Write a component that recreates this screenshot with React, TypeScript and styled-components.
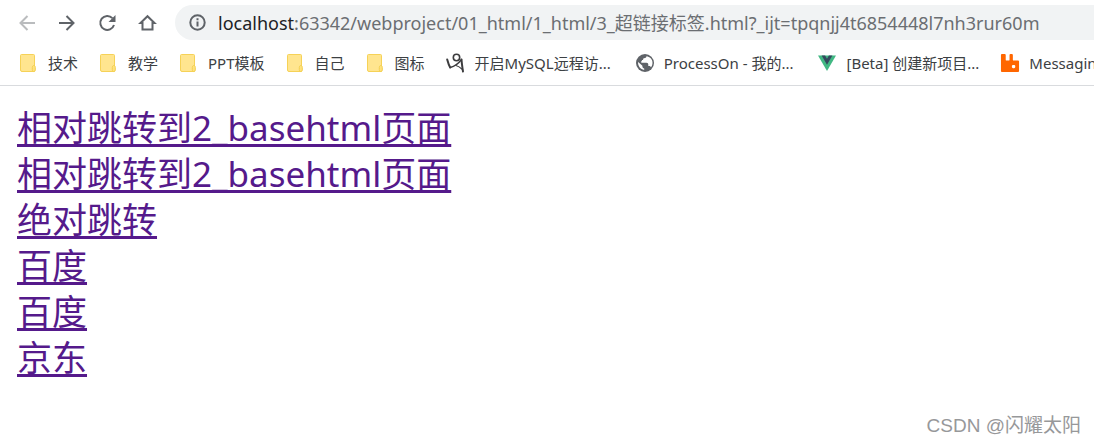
import React from 'react';
import styled, { createGlobalStyle } from 'styled-components';

const GlobalStyle = createGlobalStyle`
  * { box-sizing: border-box; }
  body {
    margin: 0;
    background: #fff;
    font-family: "Noto Sans", "Noto Sans CJK SC", sans-serif;
  }
`;

const Page = styled.div`
  position: relative;
  min-height: 100vh;
  overflow: hidden;
`;

const Toolbar = styled.header`
  display: flex;
  align-items: center;
  gap: 20px;
  padding: 5px 0 0 17px;
`;

const NavButton = styled.button<{ $muted?: boolean }>`
  flex: none;
  width: 20px;
  height: 20px;
  padding: 0;
  border: 0;
  background: none;
  color: ${(p) => (p.$muted ? '#babcbe' : '#5f6368')};

  svg { display: block; }
`;

const AddressBar = styled.label`
  flex: 1;
  display: flex;
  align-items: center;
  min-width: 0;
  height: 35px;
  margin-left: -2px;
  padding-left: 13px;
  border-radius: 18px 0 0 18px;
  background: #f1f3f4;
  color: #202124;
  font-size: 18px;
  line-height: 28px;
`;

const InfoMark = styled.span`
  display: flex;
  width: 30px;
  color: #5f6368;
`;

const AddressInput = styled.input`
  flex: 1;
  min-width: 0;
  height: 28px;
  padding: 0;
  border: 0;
  outline: 0;
  background: none;
  color: #6b6e72;
  font: inherit;
`;

const Bookmarks = styled.nav`
  display: flex;
  gap: 21px;
  height: 46px;
  padding: 0 0 0 19px;
  border-bottom: 1px solid #d9dbde;
  overflow: hidden;
`;

const Bookmark = styled.a<{ $long?: boolean }>`
  flex: none;
  display: flex;
  align-items: center;
  gap: 9px;
  padding-right: ${(p) => (p.$long ? 3 : 0)}px;
  color: #3c4043;
  font-size: 15px;
  line-height: 20px;
  text-decoration: none;
  white-space: nowrap;

  svg { display: block; flex: none; }
`;

const Links = styled.main`
  display: flex;
  flex-direction: column;
  align-items: flex-start;
  padding: 19px 17px;
`;

const PageLink = styled.a`
  color: #551a8b;
  font-size: 35px;
  line-height: 46px;
  text-decoration: underline;
  text-decoration-thickness: 3px;
  text-underline-offset: 3px;
  text-decoration-skip-ink: none;
`;

const Watermark = styled.div`
  position: absolute;
  right: 13px;
  bottom: 4px;
  color: #97989a;
  font-family: "Liberation Sans", "Noto Sans CJK SC", sans-serif;
  font-size: 19px;
  line-height: 28px;
`;

const Back = () => (
  <svg width="20" height="20" viewBox="0 0 20 20" fill="none" stroke="currentColor" strokeWidth="2">
    <path d="M18 10H4M10.5 3 3.5 10l7 7" />
  </svg>
);

const Forward = () => (
  <svg width="20" height="20" viewBox="0 0 20 20" fill="none" stroke="currentColor" strokeWidth="2">
    <path d="M2 10h14M9.5 3l7 7-7 7" />
  </svg>
);

const Reload = () => (
  <svg width="20" height="20" viewBox="0 0 20 20">
    <path d="M15.4 5.1A7 7 0 1 0 17 12" fill="none" stroke="currentColor" strokeWidth="2" />
    <path d="M18.5 2v7h-7z" fill="currentColor" />
  </svg>
);

const Home = () => (
  <svg width="20" height="20" viewBox="0 0 20 20" fill="none" stroke="currentColor" strokeWidth="2">
    <path d="M3.500 10H5.500v6.500h10V10h2L10.500 3.200z" />
  </svg>
);

const Info = () => (
  <svg width="19" height="19" viewBox="0 0 19 19" fill="none" stroke="currentColor" strokeWidth="2">
    <circle cx="9.500" cy="9.500" r="7.200" />
    <path d="M9.500 8.500v5M9.500 5.300v2" />
  </svg>
);

const Folder = () => (
  <svg width="20" height="20" viewBox="0 0 20 20">
    <path d="M2.500 1.500h12q1 0 1 1v15.500q0 .5-.5.5h-12q-1.500 0-1.500-1.500v-14.500q0-1 1-1z" fill="#ffe58f" stroke="#f6d257" />
    <path d="M14.500 12.500h1q.8.8.8 2v2.500q0 1.500-1.500 1.500h-.500q-1-.5-1-2v-2q0-1.500 1.200-2z" fill="#ffe27c" stroke="#f3cf50" />
  </svg>
);

const Scribble = () => (
  <svg width="20" height="20" viewBox="0 0 20 20" fill="none" stroke="#3c3c3e" strokeLinecap="round" strokeLinejoin="round">
    <circle cx="10.500" cy="4.500" r="3.200" strokeWidth="1.600" />
    <path d="M1.200 6.500c.8 3 1.500 5.500 3 8" strokeWidth="2" />
    <path d="M4.200 14.500C8 13.500 12.500 10.500 15.500 6.500" strokeWidth="1.400" />
    <path d="M15.500 6.500c.2 3.500.8 7.500 1.500 12" strokeWidth="2" />
    <path d="M10 12.500c2 .5 4.500 2.200 6.500 4" strokeWidth="1.200" />
  </svg>
);

const Globe = () => (
  <svg width="20" height="20" viewBox="0 0 20 20">
    <circle cx="10" cy="10" r="9" fill="#5f6368" />
    <path d="M11.500 3.200c-.3 1.500-1 1.900-2.500 2-.9.100-.9.900-.9 1.800 0 .7-.8.900-1.800.9v1.800h5.200c1.300 0 1.800.9 1.800 1.800v1.400h.9c.9 0 1.500.6 1.800 1.300 2.200-2.500 2-6.500-.3-8.900-1.200-1.200-2.600-1.900-4.200-2.100z" fill="#fff" />
    <path d="M3.100 9.100c-.4 3.900 2.300 7.300 6.100 7.800v-1.500c-1 0-1.800-.8-1.800-1.800v-.9z" fill="#fff" />
  </svg>
);

const Vue = () => (
  <svg width="20" height="20" viewBox="0 0 20 20">
    <path d="M1 2.500h18L10 18z" fill="#41b883" />
    <path d="M4.600 2.500h3.500L10 5.700l1.900-3.200h3.500L10 11.800z" fill="#35495e" />
  </svg>
);

const Rabbit = () => (
  <svg width="20" height="20" viewBox="0 0 21 21">
    <path d="M2 1h3q1 0 1 1v5q0 1 1 1h2q1 0 1-1V2q0-1 1-1h1.500q1 0 1 1v5q0 1 1 1H19q1 0 1 1v10q0 1-1 1H2q-1 0-1-1V2q0-1 1-1z" fill="#ff6600" />
    <rect x="12.500" y="12.500" width="3.500" height="3.500" rx="1.200" fill="#fff" />
  </svg>
);

const bookmarks = [
  { title: '技术', icon: <Folder /> },
  { title: '教学', icon: <Folder /> },
  { title: 'PPT模板', icon: <Folder /> },
  { title: '自己', icon: <Folder /> },
  { title: '图标', icon: <Folder /> },
  { title: '开启MySQL远程访...', icon: <Scribble />, long: true },
  { title: 'ProcessOn - 我的...', icon: <Globe />, long: true },
  { title: '[Beta] 创建新项目...', icon: <Vue /> },
  { title: 'Messaging', icon: <Rabbit /> },
];

const links = [
  '相对跳转到2_basehtml页面',
  '相对跳转到2_basehtml页面',
  '绝对跳转',
  '百度',
  '百度',
  '京东',
];

export default function App() {
  return (
    <Page>
      <GlobalStyle />
      <Toolbar>
        <NavButton $muted aria-label="Back"><Back /></NavButton>
        <NavButton aria-label="Forward"><Forward /></NavButton>
        <NavButton aria-label="Reload"><Reload /></NavButton>
        <NavButton aria-label="Home"><Home /></NavButton>
        <AddressBar>
          <InfoMark><Info /></InfoMark>
          <span>localhost</span>
          <AddressInput
            aria-label="Address"
            spellCheck={false}
            defaultValue=":63342/webproject/01_html/1_html/3_超链接标签.html?_ijt=tpqnjj4t6854448l7nh3rur60m"
          />
        </AddressBar>
      </Toolbar>
      <Bookmarks>
        {bookmarks.map((b) => (
          <Bookmark key={b.title} href="#" $long={b.long}>
            {b.icon}
            <span>{b.title}</span>
          </Bookmark>
        ))}
      </Bookmarks>
      <Links>
        {links.map((text, i) => (
          <PageLink key={i} href="#">{text}</PageLink>
        ))}
      </Links>
      <Watermark>CSDN @闪耀太阳</Watermark>
    </Page>
  );
}
